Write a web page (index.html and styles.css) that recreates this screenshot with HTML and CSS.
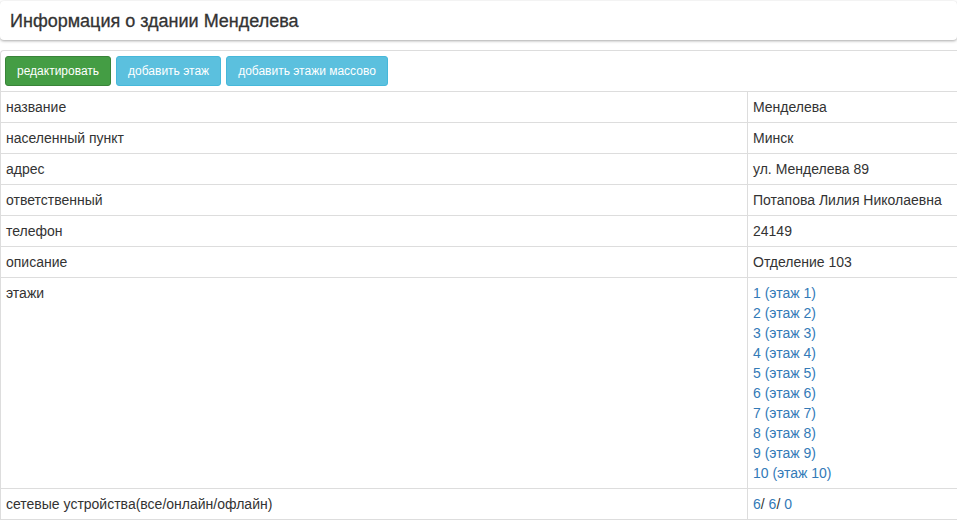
FILE: index.html
```html
<!DOCTYPE html>
<html lang="ru">
  <head>
    <meta name="viewport" content="width=device-width,initial-scale=1">
    <title>Информация о здании Менделева</title>
    <link rel="stylesheet" href="styles.css">
  </head>
<body>
  <div class="page-head">
    <h3 class="title">Информация о здании Менделева</h3>
  </div>
  <div class="panel">
    <div class="toolbar">
      <button class="btn green">редактировать</button>
      <button class="btn blue">добавить этаж</button>
      <button class="btn blue">добавить этажи массово</button>
    </div>
    <table class="info">
      <tr><td class="key">название</td><td>Менделева</td></tr>
      <tr><td class="key">населенный пункт</td><td>Минск</td></tr>
      <tr><td class="key">адрес</td><td>ул. Менделева 89</td></tr>
      <tr><td class="key">ответственный</td><td>Потапова Лилия Николаевна</td></tr>
      <tr><td class="key">телефон</td><td>24149</td></tr>
      <tr><td class="key">описание</td><td>Отделение 103</td></tr>
      <tr>
        <td class="key">этажи</td>
        <td>
          <a href="#">1 (этаж 1)</a><br>
          <a href="#">2 (этаж 2)</a><br>
          <a href="#">3 (этаж 3)</a><br>
          <a href="#">4 (этаж 4)</a><br>
          <a href="#">5 (этаж 5)</a><br>
          <a href="#">6 (этаж 6)</a><br>
          <a href="#">7 (этаж 7)</a><br>
          <a href="#">8 (этаж 8)</a><br>
          <a href="#">9 (этаж 9)</a><br>
          <a href="#">10 (этаж 10)</a>
        </td>
      </tr>
      <tr><td class="key">сетевые устройства(все/онлайн/офлайн)</td><td><a href="#">6</a>/ <a href="#">6</a>/ <a href="#">0</a></td></tr>
    </table>
  </div>
</body>
</html>
```

FILE: styles.css
```css
html, body {
  padding: 0;
  margin: 0;
  background: #fff;
  font-family: "Liberation Sans", Arial, sans-serif;
  font-size: 14px;
  line-height: 20px;
  color: #333;
}
.page-head {
  margin-top: 1px;
  height: 39px;
  border-radius: 4px;
  background: #fff;
  box-shadow: 0 1px 3px rgba(0, 0, 0, 0.35);
  display: flex;
  align-items: center;
  padding-left: 10px;
}
.title {
  margin: 0;
  font-size: 18px;
  font-weight: normal;
  line-height: 20px;
  color: #333;
  -webkit-text-stroke: 0.3px #333;
}
.panel {
  margin-top: 10px;
  border-top: 1px solid #ddd;
  border-left: 1px solid #ddd;
  border-top-left-radius: 4px;
}
.toolbar {
  padding: 5px 4px 5px;
  display: flex;
  gap: 5px;
}
.btn {
  font-family: "Liberation Sans", Arial, sans-serif;
  font-size: 12px;
  line-height: 18px;
  padding: 5px 11px;
  border-radius: 3px;
  border: 1px solid transparent;
  color: #fff;
}
.green {
  background: #449d44;
  border-color: #398439;
}
.blue {
  background: #5bc0de;
  border-color: #46b8da;
}
.info {
  width: 100%;
  border-collapse: collapse;
  font-size: 14px;
}
.info td {
  border-top: 1px solid #ddd;
  border-bottom: 1px solid #ddd;
  padding: 5px 5px;
  line-height: 20px;
  vertical-align: top;
  white-space: nowrap;
}
.info td.key {
  width: 736px;
  border-right: 1px solid #ddd;
}
.info a {
  color: #337ab7;
  text-decoration: none;
}
```
